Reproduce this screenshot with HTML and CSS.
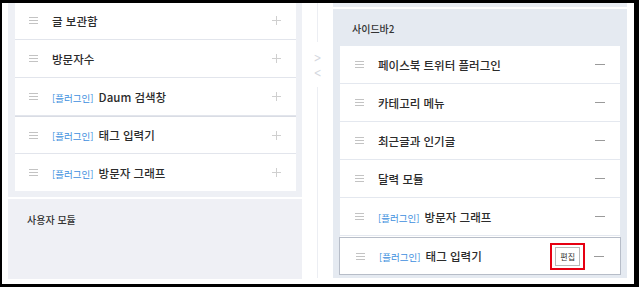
FILE: index.html
```html
<!DOCTYPE html>
<html lang="ko">
<head>
  <meta charset="UTF-8">
  <meta name="viewport" content="width=device-width, initial-scale=1">
  <title>사이드바 설정</title>
  <link rel="stylesheet" href="styles.css">
</head>
<body>

  <div class="frame">

    <!-- 왼쪽: 사용 가능한 모듈 -->
    <div class="left-col">
      <div class="module-box">
        <ul class="module-list">
          <li class="item"><span class="grip"></span><span class="name">글 보관함</span><span class="plus"></span></li>
          <li class="item"><span class="grip"></span><span class="name">방문자수</span><span class="plus"></span></li>
          <li class="item"><span class="grip"></span><span class="name"><em>[플러그인]</em> Daum 검색창</span><span class="plus"></span></li>
          <li class="item"><span class="grip"></span><span class="name"><em>[플러그인]</em> 태그 입력기</span><span class="plus"></span></li>
          <li class="item"><span class="grip"></span><span class="name"><em>[플러그인]</em> 방문자 그래프</span><span class="plus"></span></li>
        </ul>
      </div>
      <div class="user-box">
        <h3>사용자 모듈</h3>
      </div>
    </div>

    <!-- 가운데 이동 화살표 -->
    <div class="mid-col">
      <div class="rail top"></div>
      <div class="arrows">
        <span class="chev">&gt;</span>
        <span class="chev">&lt;</span>
      </div>
      <div class="rail bottom"></div>
    </div>

    <!-- 오른쪽: 사이드바2 -->
    <div class="right-col">
      <div class="prev-strip"></div>
      <div class="sidebar-box">
        <h3>사이드바2</h3>
        <ul class="module-list">
          <li class="item"><span class="grip"></span><span class="name">페이스북 트위터 플러그인</span><span class="minus"></span></li>
          <li class="item"><span class="grip"></span><span class="name">카테고리 메뉴</span><span class="minus"></span></li>
          <li class="item"><span class="grip"></span><span class="name">최근글과 인기글</span><span class="minus"></span></li>
          <li class="item"><span class="grip"></span><span class="name">달력 모듈</span><span class="minus"></span></li>
          <li class="item"><span class="grip"></span><span class="name"><em>[플러그인]</em> 방문자 그래프</span><span class="minus"></span></li>
          <li class="item active"><span class="grip"></span><span class="name"><em>[플러그인]</em> 태그 입력기</span><span class="mark"><button class="edit-btn">편집</button></span><span class="minus"></span></li>
        </ul>
      </div>
    </div>

  </div>

</body>
</html>
```

FILE: styles.css
```css
body {
  margin: 0;
  font-family: "Noto Sans CJK KR", "Noto Sans", sans-serif;
  color: #333;
}

.frame {
  width: 632px;
  height: 281px;
  border-style: solid;
  border-color: #000;
  border-width: 3px 5px 3px 2px;
  background: white;
  display: flex;
  overflow: hidden;
}

ul {
  list-style: none;
  margin: 0;
  padding: 0;
}

/* left column */
.left-col {
  width: 294px;
  margin-left: 6px;
  margin-top: -1px;
  display: flex;
  flex-direction: column;
}

.module-box {
  background: #eef0f5;
  padding: 0 6px 6px 7px;
}

.module-list {
  background: white;
}

.item {
  height: 37px;
  display: flex;
  align-items: center;
  padding: 0 15px 0 14px;
  border-bottom: 1px solid #e2e5ec;
  font-size: 11.5px;
  font-weight: 500;
  color: #2b2b2b;
  background: white;
}

.module-box .item:last-child {
  border-bottom: none;
}

.module-box .item:nth-child(4) {
  border-top: 1px solid #d9dce4;
  height: 36px;
}

.grip {
  width: 9px;
  height: 7px;
  margin-right: 14px;
  background: linear-gradient(#c3c3c3 0 1px, transparent 1px 3px, #c3c3c3 3px 4px, transparent 4px 6px, #c3c3c3 6px 7px);
}

.name {
  flex: 1;
  white-space: nowrap;
}

.name em {
  font-style: normal;
  font-weight: 400;
  font-size: 9.5px;
  color: #3e8fde;
  margin-right: 2px;
}

.plus {
  width: 9px;
  height: 9px;
  background:
    linear-gradient(#cfcfcf, #cfcfcf) center / 9px 1px no-repeat,
    linear-gradient(#cfcfcf, #cfcfcf) center / 1px 9px no-repeat;
}

.minus {
  width: 10px;
  height: 1px;
  background: #9a9a9a;
}

.user-box {
  margin-top: 2px;
  height: 80px;
  background: #eff0f5;
  padding: 0 19px;
}

h3 {
  margin: 0;
  font-size: 10px;
  font-weight: 500;
  color: #333;
}

.user-box h3 {
  padding-top: 13px;
}

/* middle */
.mid-col {
  width: 31px;
  display: flex;
  flex-direction: column;
  align-items: center;
}

.rail {
  width: 1px;
  background: #eceef3;
}

.rail.top {
  height: 39px;
}

.rail.bottom {
  height: 191px;
}

.arrows {
  height: 45px;
  display: flex;
  flex-direction: column;
  align-items: center;
  justify-content: center;
}

.chev {
  font-family: "DejaVu Sans", sans-serif;
  font-size: 13px;
  line-height: 15px;
  color: #d4d7de;
  transform: scaleX(0.7);
}

/* right column */
.right-col {
  width: 294px;
  display: flex;
  flex-direction: column;
}

.prev-strip {
  height: 4px;
  background: #e9edf3;
  margin-bottom: 2px;
}

.sidebar-box {
  height: 269px;
  box-sizing: border-box;
  background: #e5eaf1;
  padding: 0 7px;
}

.sidebar-box h3 {
  height: 37px;
  line-height: 40px;
  padding-left: 12px;
}

.sidebar-box .item {
  padding: 0 15px 0 15px;
  border-bottom: 1px solid #e4e8ef;
}

.sidebar-box .item.active {
  margin-top: 1px;
  margin-left: -1px;
  margin-right: -1px;
  height: 36px;
  border: 1px solid #b7bdc8;
  padding-left: 16px;
  padding-right: 16px;
}

.mark {
  border: 2px solid #e60012;
  padding: 2px 3px;
  margin-right: 9px;
  display: flex;
}

.edit-btn {
  font-family: "Noto Sans CJK KR", sans-serif;
  font-size: 8px;
  line-height: 12px;
  padding: 3px 4px 2px;
  background: white;
  border: 1px solid #b9b9b9;
  color: #333;
  margin: 0;
}
```
